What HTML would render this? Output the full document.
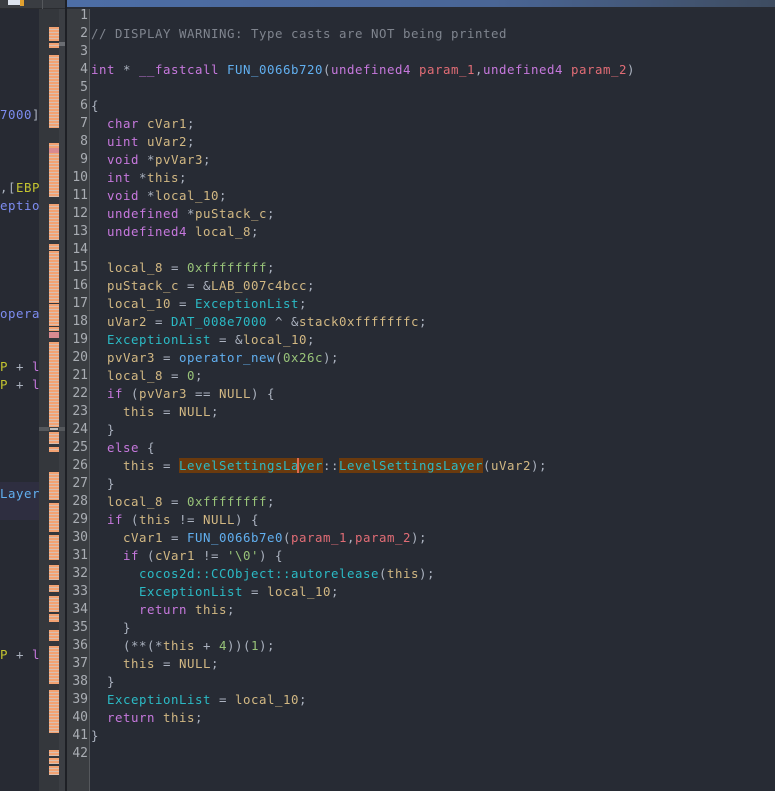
<!DOCTYPE html>
<html><head><meta charset="utf-8"><style>
*{margin:0;padding:0;box-sizing:border-box}
body{width:775px;height:791px;background:#282c34;overflow:hidden;position:relative;font-family:"DejaVu Sans Mono","Liberation Mono",monospace;font-size:12.4px}
.abs{position:absolute}
#left{left:0;top:9px;width:39px;height:782px;background:#272a33}
#strip{left:39px;top:9px;width:10px;height:782px;background:#34373c}
#mark{left:49px;top:9px;width:10px;height:782px;background:#34373c}
#strip2{left:59px;top:9px;width:6px;height:782px;background:#3b3e43}
#div{left:65px;top:0;width:2px;height:791px;background:#1e2025}
#gut{left:67px;top:9px;width:23px;height:782px;background:#3a3d41}
#gsep{left:89px;top:9px;width:1px;height:782px;background:#55585c}
#code{left:90px;top:9px;width:685px;height:782px;background:#272b34}
#top{left:0;top:0;width:65px;height:9px;background:#3a3d42;border-bottom:1px solid #2a2c30}
#tab{left:67px;top:0;width:708px;height:7px;background:linear-gradient(90deg,#4d6ea6,#4a6696 60%,#3e4c60)}
.bar{position:absolute;left:49px;width:10px;background:repeating-linear-gradient(#f2a272 0 2px,#d9bfb0 2px 3px)}
.ln{position:absolute;left:67px;width:21px;text-align:right;color:#a9adb3;line-height:18px;white-space:pre;font-size:13px}
.cl{position:absolute;left:91px;line-height:18px;white-space:pre;color:#abb2bf;letter-spacing:0.54px}
.k{color:#c678dd}.v{color:#d2b883}.f{color:#61afef}.c{color:#2bbac5}.n{color:#98c379}.p{color:#e06c75}.cm{color:#7f848e}
.hl{background:#6a3a0e}
.lt{position:absolute;left:0;line-height:18px;white-space:pre;letter-spacing:0.54px}
</style></head><body>
<div class="abs" id="top"></div>
<div class="abs" style="left:8px;top:0;width:14px;height:5px;background:#dde3ee"></div>
<div class="abs" style="left:20px;top:0;width:4px;height:6px;background:#e0a030"></div>
<div class="abs" style="left:42px;top:0;width:1px;height:9px;background:#55585c"></div>
<div class="abs" id="tab"></div>
<div class="abs" id="left"></div>
<div class="abs" style="left:0;top:482px;width:39px;height:38px;background:#2e2e40"></div>
<div class="lt" style="top:106px;color:#7d8cf0">7000<span style="color:#abb2bf">]</span></div>
<div class="lt" style="top:179px;color:#abb2bf">,[<span style="color:#c5c530">EBP</span></div>
<div class="lt" style="top:197px;color:#7d8cf0">eption</div>
<div class="lt" style="top:305px;color:#7d8cf0">operat</div>
<div class="lt" style="top:358px;color:#c5c530">P <span style="color:#abb2bf">+</span> <span class="k">lo</span></div>
<div class="lt" style="top:376px;color:#c5c530">P <span style="color:#abb2bf">+</span> <span class="k">lo</span></div>
<div class="lt" style="top:485px;color:#61afef">Layer</div>
<div class="lt" style="top:646px;color:#c5c530">P <span style="color:#abb2bf">+</span> <span class="k">lo</span></div>
<div class="abs" id="strip"></div>
<div class="abs" id="mark"></div>
<div class="abs" id="strip2"></div>
<div class="abs" style="left:59px;top:42px;width:6px;height:4px;background:#6a6d72"></div>
<div class="abs" style="left:39px;top:427px;width:26px;height:4px;background:#55585c"></div>
<div class="bar" style="top:27px;height:14px"></div>
<div class="bar" style="top:43px;height:5px"></div>
<div class="bar" style="top:55px;height:73px"></div>
<div class="bar" style="top:143px;height:54px"></div>
<div class="abs" style="left:49px;top:148px;width:10px;height:5px;background:#d98a90"></div>
<div class="bar" style="top:204px;height:36px"></div>
<div class="bar" style="top:244px;height:6px"></div>
<div class="bar" style="top:251px;height:52px"></div>
<div class="bar" style="top:304px;height:22px"></div>
<div class="bar" style="top:327px;height:4px"></div>
<div class="abs" style="left:49px;top:332px;width:10px;height:6px;background:#d98a90"></div>
<div class="bar" style="top:342px;height:85px"></div>
<div class="abs" style="left:49px;top:427px;width:10px;height:4px;background:#c0c0c0;border:1px solid #444"></div>
<div class="bar" style="top:432px;height:12px"></div>
<div class="bar" style="top:447px;height:5px"></div>
<div class="bar" style="top:472px;height:28px"></div>
<div class="bar" style="top:503px;height:29px"></div>
<div class="bar" style="top:535px;height:25px"></div>
<div class="bar" style="top:565px;height:15px"></div>
<div class="bar" style="top:585px;height:7px"></div>
<div class="bar" style="top:596px;height:16px"></div>
<div class="bar" style="top:614px;height:8px"></div>
<div class="bar" style="top:630px;height:11px"></div>
<div class="bar" style="top:646px;height:38px"></div>
<div class="bar" style="top:690px;height:43px"></div>
<div class="bar" style="top:750px;height:6px"></div>
<div class="bar" style="top:758px;height:6px"></div>
<div class="bar" style="top:766px;height:9px"></div>
<div class="abs" id="div"></div>
<div class="abs" id="gut"></div>
<div class="abs" id="gsep"></div>
<div class="abs" id="code"></div>
<div id="lns"></div>
<script>
var L=[
'',
'<span class="cm">// DISPLAY WARNING: Type casts are NOT being printed</span>',
'',
'<span class="k">int</span> * <span class="k">__fastcall</span> <span class="f">FUN_0066b720</span>(<span class="k">undefined4</span> <span class="p">param_1</span>,<span class="k">undefined4</span> <span class="p">param_2</span>)',
'',
'{',
'  <span class="k">char</span> <span class="v">cVar1</span>;',
'  <span class="k">uint</span> <span class="v">uVar2</span>;',
'  <span class="k">void</span> *<span class="v">pvVar3</span>;',
'  <span class="k">int</span> *<span class="v">this</span>;',
'  <span class="k">void</span> *<span class="v">local_10</span>;',
'  <span class="k">undefined</span> *<span class="v">puStack_c</span>;',
'  <span class="k">undefined4</span> <span class="v">local_8</span>;',
'',
'  <span class="v">local_8</span> = <span class="n">0xffffffff</span>;',
'  <span class="v">puStack_c</span> = &amp;<span class="v">LAB_007c4bcc</span>;',
'  <span class="v">local_10</span> = <span class="c">ExceptionList</span>;',
'  <span class="v">uVar2</span> = <span class="c">DAT_008e7000</span> ^ &amp;<span class="v">stack0xfffffffc</span>;',
'  <span class="c">ExceptionList</span> = &amp;<span class="v">local_10</span>;',
'  <span class="v">pvVar3</span> = <span class="f">operator_new</span>(<span class="n">0x26c</span>);',
'  <span class="v">local_8</span> = <span class="n">0</span>;',
'  <span class="k">if</span> (<span class="v">pvVar3</span> == <span class="v">NULL</span>) {',
'    <span class="v">this</span> = <span class="v">NULL</span>;',
'  }',
'  <span class="k">else</span> {',
'    <span class="v">this</span> = <span class="c hl">LevelSettingsLa<span style="border-left:2px solid #e06c50;margin-left:-2px"></span>yer</span>::<span class="c hl">LevelSettingsLayer</span>(<span class="v">uVar2</span>);',
'  }',
'  <span class="v">local_8</span> = <span class="n">0xffffffff</span>;',
'  <span class="k">if</span> (<span class="v">this</span> != <span class="v">NULL</span>) {',
'    <span class="v">cVar1</span> = <span class="f">FUN_0066b7e0</span>(<span class="p">param_1</span>,<span class="p">param_2</span>);',
'    <span class="k">if</span> (<span class="v">cVar1</span> != <span class="n">\'\\0\'</span>) {',
'      <span class="c">cocos2d::CCObject::autorelease</span>(<span class="v">this</span>);',
'      <span class="c">ExceptionList</span> = <span class="v">local_10</span>;',
'      <span class="k">return</span> <span class="v">this</span>;',
'    }',
'    (**(*<span class="v">this</span> + <span class="n">4</span>))(<span class="n">1</span>);',
'    <span class="v">this</span> = <span class="v">NULL</span>;',
'  }',
'  <span class="c">ExceptionList</span> = <span class="v">local_10</span>;',
'  <span class="k">return</span> <span class="v">this</span>;',
'}',
''];
var h='';
for(var i=0;i<L.length;i++){var t=7+i*18;
h+='<div class="ln" style="top:'+t+'px">'+(i+1)+'</div><div class="cl" style="top:'+t+'px">'+L[i]+'</div>';}
document.getElementById('lns').innerHTML=h;
</script>
</body></html>
